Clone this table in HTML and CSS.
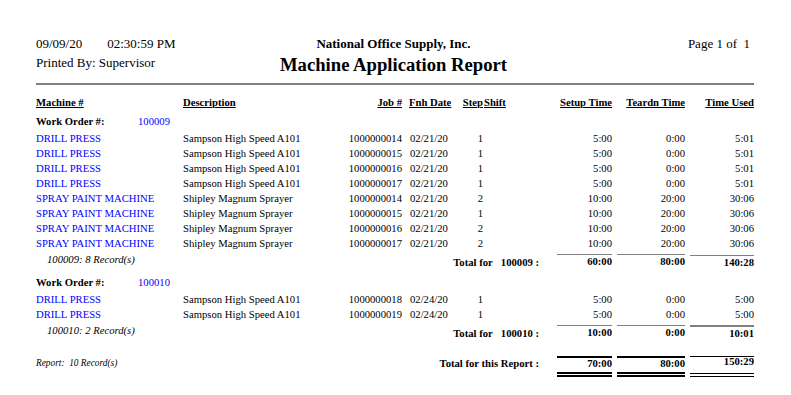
FILE: index.html
```html
<!DOCTYPE html>
<html lang="en">
<head>
<meta charset="utf-8">
<title>Machine Application Report</title>
<link rel="stylesheet" href="styles.css">
</head>
<body>
<div class="page">
  <header class="head">
    <div class="h-cell"><span>09/09/20</span><span class="time">02:30:59 PM</span></div>
    <div class="h-cell company">National Office Supply, Inc.</div>
    <div class="h-cell pageno">Page 1 of&nbsp; 1</div>
    <div class="h-cell">Printed By: Supervisor</div>
    <div class="h-cell title">Machine Application Report</div>
    <div class="h-cell"></div>
  </header>
  <div class="rule"></div>

  <div class="row colhead">
    <div>Machine #</div>
    <div>Description</div>
    <div class="r">Job #</div>
    <div class="date hd">Fnh Date</div>
    <div class="r">Step</div>
    <div class="shift">Shift</div>
    <div class="r">Setup Time</div>
    <div class="r">Teardn Time</div>
    <div class="r">Time Used</div>
  </div>

  <section class="group">
    <div class="wo"><span class="wo-label">Work Order #:</span><span class="blue">100009</span></div>
    <div class="row"><div class="blue">DRILL PRESS</div><div>Sampson High Speed A101</div><div class="r">1000000014</div><div class="date">02/21/20</div><div class="r">1</div><div></div><div class="r">5:00</div><div class="r">0:00</div><div class="r">5:01</div></div>
    <div class="row"><div class="blue">DRILL PRESS</div><div>Sampson High Speed A101</div><div class="r">1000000015</div><div class="date">02/21/20</div><div class="r">1</div><div></div><div class="r">5:00</div><div class="r">0:00</div><div class="r">5:01</div></div>
    <div class="row"><div class="blue">DRILL PRESS</div><div>Sampson High Speed A101</div><div class="r">1000000016</div><div class="date">02/21/20</div><div class="r">1</div><div></div><div class="r">5:00</div><div class="r">0:00</div><div class="r">5:01</div></div>
    <div class="row"><div class="blue">DRILL PRESS</div><div>Sampson High Speed A101</div><div class="r">1000000017</div><div class="date">02/21/20</div><div class="r">1</div><div></div><div class="r">5:00</div><div class="r">0:00</div><div class="r">5:01</div></div>
    <div class="row"><div class="blue">SPRAY PAINT MACHINE</div><div>Shipley Magnum Sprayer</div><div class="r">1000000014</div><div class="date">02/21/20</div><div class="r">2</div><div></div><div class="r">10:00</div><div class="r">20:00</div><div class="r">30:06</div></div>
    <div class="row"><div class="blue">SPRAY PAINT MACHINE</div><div>Shipley Magnum Sprayer</div><div class="r">1000000015</div><div class="date">02/21/20</div><div class="r">1</div><div></div><div class="r">10:00</div><div class="r">20:00</div><div class="r">30:06</div></div>
    <div class="row"><div class="blue">SPRAY PAINT MACHINE</div><div>Shipley Magnum Sprayer</div><div class="r">1000000016</div><div class="date">02/21/20</div><div class="r">2</div><div></div><div class="r">10:00</div><div class="r">20:00</div><div class="r">30:06</div></div>
    <div class="row"><div class="blue">SPRAY PAINT MACHINE</div><div>Shipley Magnum Sprayer</div><div class="r">1000000017</div><div class="date">02/21/20</div><div class="r">2</div><div></div><div class="r">10:00</div><div class="r">20:00</div><div class="r">30:06</div></div>
    <div class="row total">
      <div class="count">100009: 8 Record(s)</div>
      <div class="tlabel">Total for<span class="tkey">100009 :</span></div>
      <div class="tnum">60:00</div>
      <div class="tnum gap">80:00</div>
      <div class="tnum gap low">140:28</div>
    </div>
  </section>

  <section class="group">
    <div class="wo"><span class="wo-label">Work Order #:</span><span class="blue">100010</span></div>
    <div class="row"><div class="blue">DRILL PRESS</div><div>Sampson High Speed A101</div><div class="r">1000000018</div><div class="date">02/24/20</div><div class="r">1</div><div></div><div class="r">5:00</div><div class="r">0:00</div><div class="r">5:00</div></div>
    <div class="row"><div class="blue">DRILL PRESS</div><div>Sampson High Speed A101</div><div class="r">1000000019</div><div class="date">02/24/20</div><div class="r">1</div><div></div><div class="r">5:00</div><div class="r">0:00</div><div class="r">5:00</div></div>
    <div class="row total">
      <div class="count">100010: 2 Record(s)</div>
      <div class="tlabel">Total for<span class="tkey">100010 :</span></div>
      <div class="tnum">10:00</div>
      <div class="tnum gap">0:00</div>
      <div class="tnum gap thick">10:01</div>
    </div>
  </section>

  <div class="row grand">
    <div class="gcount">Report:&nbsp; 10 Record(s)</div>
    <div class="glabel">Total for this Report :</div>
    <div class="gnum">70:00</div>
    <div class="gnum gap">80:00</div>
    <div class="gnum gap thin">150:29</div>
  </div>
</div>
</body>
</html>
```

FILE: styles.css
```css
* { box-sizing: border-box; }

html, body {
  margin: 0;
  padding: 0;
  background: #ffffff;
}

body {
  font-family: "Liberation Serif", "Times New Roman", serif;
  color: #000000;
  width: 791px;
  height: 395px;
  overflow: hidden;
}

.page {
  width: 791px;
  padding: 34px 37px 0 36px;
}

/* ---------- page header ---------- */
.head {
  display: grid;
  grid-template-columns: 1fr auto 1fr;
  grid-template-rows: 19px 23px;
  padding-right: 3px;
  font-size: 13px;
}

.h-cell {
  line-height: 19px;
  white-space: nowrap;
}

.time { margin-left: 25px; }

.company {
  font-weight: bold;
  text-align: center;
}

.pageno {
  text-align: right;
  padding-right: 1px;
}

.title {
  font-weight: bold;
  font-size: 14pt;
  line-height: 23px;
  text-align: center;
}

.rule {
  margin-top: 7px;
  height: 2px;
  background: #808080;
}

/* ---------- table rows ---------- */
.row {
  display: grid;
  grid-template-columns: 147px 165px 54px 60px 21px 74px 55px 73px 69px;
  font-size: 8pt;
  line-height: 15px;
  height: 15px;
  white-space: nowrap;
}

.r { text-align: right; }
.date { padding-left: 8px; }
.date.hd { padding-left: 7px; }
.shift { padding-left: 1px; }

.blue { color: #0000ff; }

.colhead {
  margin-top: 10px;
  font-weight: bold;
}

.colhead > div {
  text-decoration: underline;
}

.wo {
  display: flex;
  font-size: 8pt;
  line-height: 15px;
  height: 15px;
  margin-top: 4px;
  margin-bottom: 2px;
}

.wo-label {
  font-weight: bold;
  width: 102px;
}

/* ---------- group totals ---------- */
.total {
  margin-top: 3px;
  height: 17px;
  align-items: start;
}

.count {
  grid-column: 1 / 3;
  font-style: italic;
  line-height: 11px;
  padding-left: 11px;
}

.tlabel {
  grid-column: 3 / 7;
  text-align: right;
  font-weight: bold;
  line-height: 13px;
  padding-top: 2px;
  padding-right: 18px;
}

.tkey { margin-left: 8px; }

.tnum {
  text-align: right;
  font-weight: bold;
  line-height: 13px;
  border-top: 1px solid #808080;
}

.gap { margin-left: 5px; }
.tnum.low { margin-top: 1px; }
.tnum.thick { border-top-width: 2px; }

/* ---------- report totals ---------- */
.grand {
  margin-top: 14px;
  height: auto;
  align-items: start;
}

.gcount {
  grid-column: 1 / 3;
  font-style: italic;
  font-size: 7pt;
  line-height: 11px;
  padding-top: 2px;
}

.glabel {
  grid-column: 3 / 7;
  text-align: right;
  font-weight: bold;
  line-height: 13px;
  padding-top: 1px;
  padding-right: 18px;
}

.gnum {
  text-align: right;
  font-weight: bold;
  line-height: 11px;
  border-top: 2px solid #000000;
  padding-bottom: 3px;
  border-bottom: 5px double #000000;
}

.gnum.thin {
  border-top-width: 1px;
  line-height: 9px;
  padding-bottom: 7px;
  border-bottom-width: 4px;
}
```
